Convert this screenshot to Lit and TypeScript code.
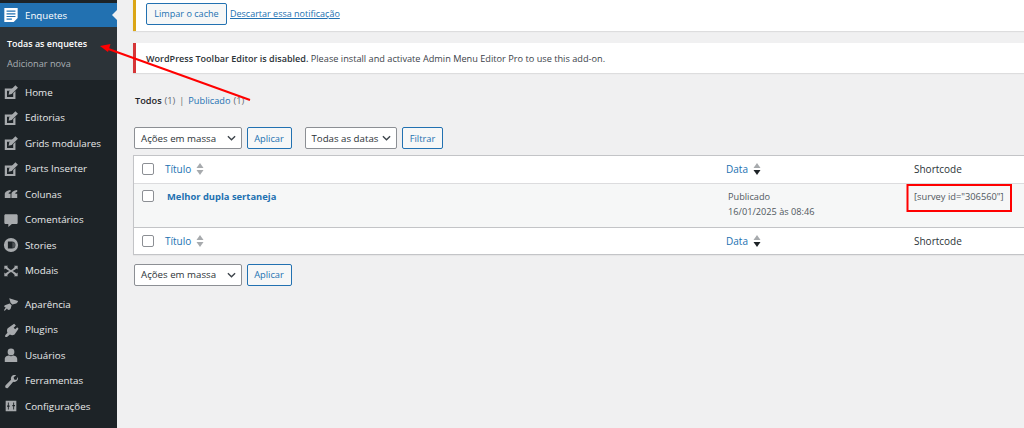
import { LitElement, html, css, svg } from "lit";
import { customElement } from "lit/decorators.js";

const ICONS: Record<string, unknown> = {
  poll: svg`<path fill="#fff" d="M1.500 1h15v11.500L12 17H1.500z"/><path fill="#2271b1" d="M4 4h10v1.300H4zM4 7h10v1.300H4zM4 10h10v1.300H4zM4 13h6v1.300H4z"/>`,
  write: svg`<path d="M2 5h10L9.500 7.500H4.500v7h7V10.500L14 8v9H2z"/><path d="M14 1.500 16.800 4.300 9.800 11.300 6.300 12 7 8.500z"/>`,
  quote: svg`<path d="M8.500 4.500v2C6.800 7 6.300 7.800 6.300 8.800h2.200v4.700H2V9.200C2 6.800 4.500 4.800 8.500 4.500zM16 4.500v2c-1.700.5-2.200 1.300-2.200 2.300H16v4.700H9.500V9.200C9.500 6.800 12 4.800 16 4.500z"/>`,
  comment: svg`<path d="M3 2.500h12c.8 0 1.500.7 1.500 1.500v8c0 .8-.7 1.500-1.500 1.500h-5L6 17v-3.500H3c-.8 0-1.500-.7-1.500-1.500V4c0-.8.7-1.500 1.500-1.500z"/>`,
  stories: svg`<path fill-rule="evenodd" d="M9 1a8 8 0 1 1 0 16A8 8 0 0 1 9 1zM5.500 5v8H10a4 4 0 0 0 0-8z"/><path d="M10.500 5.800a3.200 3.200 0 0 1 0 6.400z" opacity=".35"/>`,
  modal: svg`<path d="M1.500 3h4.300L4.600 4.200C6 6 7.500 7.300 9 7.900c1.500-.6 3-1.900 4.400-3.700L12.200 3h4.300v4.300l-1.200-1.200C13.600 7.400 12 8.400 10.800 9c1.200.6 2.800 1.600 4.500 2.900l1.200-1.200V15h-4.300l1.200-1.200C12 12 10.500 10.700 9 10.100c-1.500.6-3 1.900-4.400 3.700L5.800 15H1.500v-4.300l1.200 1.200C4.400 10.600 6 9.600 7.200 9 6 8.400 4.400 7.400 2.700 6.100L1.500 7.300z"/>`,
  brush: svg`<path d="M7 2.500 17 5.500c-.5 1.500-1.500 2.800-3.200 3.200L10.500 9.500 8.500 7.700zM7.500 8.500l2.200 2-1 3.500c-.5 1.500-2 2-3.500 1.300L4.500 14 2 16.500 1 16l2-3-1.500-1c-.3-.7 0-1.300.7-1.700z"/>`,
  plugin: svg`<path d="M12.500 2 14.500 4 12 6.500l1.700 1.700L16 6l1.500 1.500L13 14c-1.500 1-3.500 1-5.200.2L4.500 17H2.500v-2L5 12c-.8-1.700-.7-3.500.3-5z"/>`,
  user: svg`<circle cx="9" cy="5.500" r="3.800"/><path d="M2 17v-3.500C2 11 5 9.700 6.800 9.700c1.300.9 3.100.9 4.400 0C13 9.700 16 11 16 13.500V17z"/>`,
  wrench: svg`<path d="M16.700 4.500c.7 2-.2 4.300-2.200 5.200-1 .5-2 .5-3 .2L5.700 16.500c-.8.800-2 .7-2.700 0-.7-.8-.7-2 0-2.800L9 7.700c-.5-2 .3-4.100 2.200-5.100 1.200-.6 2.500-.6 3.600-.2l-2.800 2.500.6 2.300 2.300.7z"/>`,
  settings: svg`<path fill-rule="evenodd" d="M3 3h12v12H3zM6.500 5h-1v3.500H4.500v1.300h1V13h1V9.800h1V8.500h-1zM12.500 5h-1v3H10.500v1.300h1V13h1V9.300h1V8h-1z"/>`,
};

const icon = (n: string) => html`<svg class="mi" viewBox="0 0 18 18" aria-hidden="true">${ICONS[n]}</svg>`;

const SORT_GREY = svg`<path fill="#a7aaad" d="M4 0 7.500 5H.5z"/><path fill="#a7aaad" d="M4 12 .5 7h7z"/>`;
const SORT_DARK = svg`<path fill="#a7aaad" d="M4 0 7.500 5H.5z"/><path fill="#1d2327" d="M4 12 .5 7h7z"/>`;
const CHEV = html`<svg class="chev" viewBox="0 0 10 6"><path d="M1 1l4 4 4-4" fill="none" stroke="#3c434a" stroke-width="1.500"/></svg>`;

const GROUP1 = [
  ["write", "Home"], ["write", "Editorias"], ["write", "Grids modulares"], ["write", "Parts Inserter"],
  ["quote", "Colunas"], ["comment", "Comentários"], ["stories", "Stories"], ["modal", "Modais"],
];
const GROUP2 = [
  ["brush", "Aparência"], ["plugin", "Plugins"], ["user", "Usuários"], ["wrench", "Ferramentas"], ["settings", "Configurações"],
];

@customElement("app-root")
export class AppRoot extends LitElement {
  static styles = css`
    :host { display: block; width: 1024px; height: 428px; overflow: hidden; position: relative; background: #f0f0f1;
      font-family: "Open Sans", "Noto Sans", sans-serif; font-size: 10px; color: #3c434a; }
    * { box-sizing: border-box; }
    .page { display: flex; height: 428px; }
    .side { width: 117px; flex: none; background: #1d2327; padding-top: 3px; color: #f0f0f1; }
    .cur { height: 24px; background: #2271b1; color: #fff; display: flex; align-items: center; gap: 6px; padding-left: 3px; position: relative; font-size: 9.700px; }
    .cur::after { content: ""; position: absolute; right: 0; top: 7px; border: 5.500px solid transparent; border-right-color: #f0f0f1; border-left: 0; }
    .cur .mi { fill: #fff; }
    .sub { background: #2c3338; height: 53px; padding-top: 6px; font-size: 9.200px; color: #a9afb4; }
    .sub div { height: 20px; display: flex; align-items: center; padding-left: 7px; }
    .sub .on { color: #fff; font-weight: 600; font-size: 8.950px; }
    .item { height: 25.500px; display: flex; align-items: center; gap: 6px; padding-left: 3px; font-size: 9.800px; color: #e8eaeb; }
    .mi { width: 16px; height: 16px; flex: none; fill: #a7aaad; }
    .gap { height: 8px; }
    .items .item:first-child { margin-top: -.5px; }
    .main { flex: 1; min-width: 0; padding-left: 16px; }
    .notice { background: #fff; box-shadow: 0 1px 1px rgba(0,0,0,.08); display: flex; align-items: center; }
    .n1 { height: 32px; border-left: 3px solid #dba617; padding: 0 0 3px 10px; margin-top: -1px; gap: 3px; }
    .n2 { height: 30px; margin-top: 12px; border-left: 3px solid #d63638; padding-left: 10px; font-size: 9.200px; }
    .btn { display: inline-flex; align-items: center; justify-content: center; border: 1px solid #2271b1; border-radius: 2px; background: #f6f7f7; color: #2271b1; font-size: 9.300px; height: 22px; padding: 0; }
    .lim { width: 81px; font-size: 9.100px; }
    .apl { width: 45px; }
    .fil { width: 41px; }
    .link { color: #2271b1; text-decoration: underline; font-size: 9px; }
    .n2 b { font-weight: 600; font-size: 9.050px; color: #2c3338; }
    .views { margin: 20px 0 0 2px; height: 14px; display: flex; align-items: center; font-size: 9.200px; color: #646970; }
    .views b { color: #1d2327; font-weight: 600; margin-right: 3px; }
    .views a { color: #2271b1; margin-right: 3px; }
    .views i { font-style: normal; margin: 0 4px; }
    .bar { display: flex; gap: 5px; height: 22px; margin-left: 1px; }
    .b1 { margin-top: 20px; }
    .b2 { margin-top: 8.500px; }
    .sel { display: flex; align-items: center; justify-content: space-between; background: #fff; border: 1px solid #8c8f94; border-radius: 2px; color: #2c3338; font-size: 9.700px; padding: 0 5px 0 6px; }
    .chev { width: 9px; height: 6px; }
    .w1 { width: 107.500px; }
    .w2 { width: 92.500px; margin-left: 8px; }
    .table { margin: 6px -2px 0 0; background: #fff; border: 1px solid #c3c4c7; box-shadow: 0 1px 1px rgba(0,0,0,.04); }
    .row { display: grid; grid-template-columns: 31px 561px 188px 1fr; align-items: center; height: 26.500px; font-size: 10px; }
    .row.body { height: 45px; background: #f6f7f7; align-items: start; padding-top: 6px; border-top: 1px solid #dcdcde; border-bottom: 1px solid #c3c4c7; }
    .cb { width: 12px; height: 12px; border: 1px solid #8c8f94; border-radius: 2px; background: #fff; margin-left: 8px; }
    .th { display: flex; align-items: center; gap: 5px; color: #2271b1; }
    .th svg { width: 8px; height: 12px; }
    .plain { color: #2c3338; }
    .title { color: #2271b1; font-weight: 700; font-size: 9.400px; padding-left: 2px; }
    .data { line-height: 15px; color: #50575e; font-size: 9.200px; margin-top: -1px; padding-left: 2px; }
    .code { color: #50575e; font-size: 9.300px; margin-top: 0; }
    .over { position: absolute; inset: 0; width: 1024px; height: 428px; pointer-events: none; }
  `;

  private sort(d: unknown) {
    return html`<svg viewBox="0 0 8 12">${d}</svg>`;
  }

  private head(s: unknown) {
    return html`<div class="row head">
      <div class="cb"></div>
      <div class="th">Título ${this.sort(SORT_GREY)}</div>
      <div class="th">Data ${this.sort(s)}</div>
      <div class="plain">Shortcode</div>
    </div>`;
  }

  render() {
    return html`
      <div class="page">
        <nav class="side">
          <div class="cur">${icon("poll")}<span>Enquetes</span></div>
          <div class="sub"><div class="on">Todas as enquetes</div><div>Adicionar nova</div></div>
          <div class="items">
            ${GROUP1.map(([i, t]) => html`<div class="item">${icon(i)}<span>${t}</span></div>`)}
            <div class="gap"></div>
            ${GROUP2.map(([i, t]) => html`<div class="item">${icon(i)}<span>${t}</span></div>`)}
          </div>
        </nav>
        <main class="main">
          <div class="notice n1"><span class="btn lim">Limpar o cache</span><span class="link">Descartar essa notificação</span></div>
          <div class="notice n2"><span><b>WordPress Toolbar Editor is disabled.</b> Please install and activate Admin Menu Editor Pro to use this add-on.</span></div>
          <div class="views"><b>Todos</b><span>(1)</span><i>|</i><a>Publicado</a><span>(1)</span></div>
          <div class="bar b1">
            <div class="sel w1">Ações em massa ${CHEV}</div>
            <span class="btn apl">Aplicar</span>
            <div class="sel w2">Todas as datas ${CHEV}</div>
            <span class="btn fil">Filtrar</span>
          </div>
          <div class="table">
            ${this.head(SORT_DARK)}
            <div class="row body">
              <div class="cb"></div>
              <div class="title">Melhor dupla sertaneja</div>
              <div class="data">Publicado<br />16/01/2025 às 08:46</div>
              <div class="code">[survey id="306560"]</div>
            </div>
            ${this.head(SORT_DARK)}
          </div>
          <div class="bar b2">
            <div class="sel w1">Ações em massa ${CHEV}</div>
            <span class="btn apl">Aplicar</span>
          </div>
        </main>
      </div>
      <svg class="over" viewBox="0 0 1024 428">
        <path d="M250 100 107 48.500" stroke="#f00" stroke-width="2" fill="none"/>
        <path d="M100 46 110.500 44 108 52z" fill="#f00"/>
        <rect x="907.500" y="185" width="103.500" height="26" fill="none" stroke="#f00" stroke-width="2"/>
      </svg>
    `;
  }
}
